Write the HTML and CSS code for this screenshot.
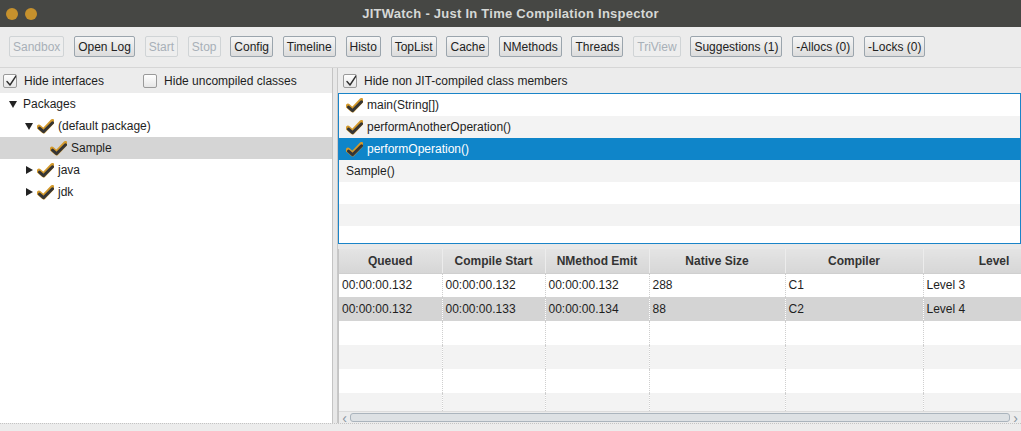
FILE: index.html
```html
<!DOCTYPE html>
<html>
<head>
<meta charset="utf-8">
<title>JITWatch</title>
<link rel="stylesheet" href="styles.css">
</head>
<body>
<svg class="defs" width="0" height="0">
  <defs>
    <g id="chk">
      <path d="M2 8 L6.5 12 L15.5 2.5" fill="none" stroke="#d49a2c" stroke-width="4.8" stroke-linecap="round" stroke-linejoin="round"/>
      <path d="M2.5 9.2 L6.5 12.7 L15.5 3.8" fill="none" stroke="#353535" stroke-width="3" stroke-linecap="round" stroke-linejoin="round"/>
    </g>
    <g id="boxchk">
      <path d="M3 7.5 L6 11 L12 2" fill="none" stroke="#2e2e2e" stroke-width="1.4" stroke-linecap="round" stroke-linejoin="round"/>
    </g>
  </defs>
</svg>
<div class="window">
  <header class="titlebar">
    <div class="lights"><span class="light"></span><span class="light"></span></div>
    <div class="title">JITWatch - Just In Time Compilation Inspector</div>
    <div></div>
  </header>
  <nav class="toolbar">
    <button class="btn" disabled>Sandbox</button>
    <button class="btn">Open Log</button>
    <button class="btn" disabled>Start</button>
    <button class="btn" disabled>Stop</button>
    <button class="btn">Config</button>
    <button class="btn">Timeline</button>
    <button class="btn">Histo</button>
    <button class="btn">TopList</button>
    <button class="btn">Cache</button>
    <button class="btn">NMethods</button>
    <button class="btn">Threads</button>
    <button class="btn" disabled>TriView</button>
    <button class="btn">Suggestions (1)</button>
    <button class="btn">-Allocs (0)</button>
    <button class="btn">-Locks (0)</button>
  </nav>
  <main class="main">
    <section class="left">
      <div class="opts">
        <label class="cb"><span class="box"><svg width="14" height="14"><use href="#boxchk"/></svg></span>Hide interfaces</label>
        <label class="cb cb-second"><span class="box"></span>Hide uncompiled classes</label>
      </div>
      <div class="tree">
        <div class="node lvl0"><span class="tri tri-d"></span><span>Packages</span></div>
        <div class="node lvl1"><span class="tri tri-d"></span><svg class="ck" width="17" height="15"><use href="#chk"/></svg><span>(default package)</span></div>
        <div class="node lvl2 sel"><svg class="ck" width="17" height="15"><use href="#chk"/></svg><span>Sample</span></div>
        <div class="node lvl1"><span class="tri tri-r"></span><svg class="ck" width="17" height="15"><use href="#chk"/></svg><span>java</span></div>
        <div class="node lvl1"><span class="tri tri-r"></span><svg class="ck" width="17" height="15"><use href="#chk"/></svg><span>jdk</span></div>
      </div>
    </section>
    <div class="vdiv"></div>
    <section class="right">
      <div class="opts">
        <label class="cb"><span class="box"><svg width="14" height="14"><use href="#boxchk"/></svg></span>Hide non JIT-compiled class members</label>
      </div>
      <div class="list">
        <div class="item"><svg class="ck" width="17" height="15"><use href="#chk"/></svg><span>main(String[])</span></div>
        <div class="item alt"><svg class="ck" width="17" height="15"><use href="#chk"/></svg><span>performAnotherOperation()</span></div>
        <div class="item selected"><svg class="ck" width="17" height="15"><use href="#chk"/></svg><span>performOperation()</span></div>
        <div class="item alt"><span>Sample()</span></div>
        <div class="item"></div>
        <div class="item alt"></div>
        <div class="item"></div>
      </div>
      <div class="hdiv"></div>
      <div class="tablewrap">
        <div class="tview">
          <table class="grid">
            <colgroup>
              <col class="c1"><col class="c2"><col class="c3"><col class="c4"><col class="c5"><col class="c6">
            </colgroup>
            <thead>
              <tr><th>Queued</th><th>Compile Start</th><th>NMethod Emit</th><th>Native Size</th><th>Compiler</th><th>Level</th></tr>
            </thead>
            <tbody>
              <tr><td>00:00:00.132</td><td>00:00:00.132</td><td>00:00:00.132</td><td>288</td><td>C1</td><td>Level 3</td></tr>
              <tr class="rsel"><td>00:00:00.132</td><td>00:00:00.133</td><td>00:00:00.134</td><td>88</td><td>C2</td><td>Level 4</td></tr>
              <tr><td></td><td></td><td></td><td></td><td></td><td></td></tr>
              <tr class="ralt"><td></td><td></td><td></td><td></td><td></td><td></td></tr>
              <tr><td></td><td></td><td></td><td></td><td></td><td></td></tr>
              <tr class="ralt"><td></td><td></td><td></td><td></td><td></td><td></td></tr>
            </tbody>
          </table>
        </div>
        <div class="hscroll">
          <span class="arr">&#8249;</span>
          <div class="track"></div>
          <span class="arr">&#8250;</span>
        </div>
      </div>
    </section>
  </main>
  <footer class="status"></footer>
</div>
</body>
</html>
```

FILE: styles.css
```css
* { box-sizing: border-box; }
html, body { margin: 0; padding: 0; }
body {
  width: 1021px;
  height: 431px;
  overflow: hidden;
  background: #ececec;
  font-family: "Liberation Sans", Arial, sans-serif;
  font-size: 12px;
  color: #1e1e1e;
}
.defs { position: absolute; width: 0; height: 0; }
.window { display: flex; flex-direction: column; height: 431px; }

.titlebar {
  height: 27px;
  background: #464744;
  display: grid;
  grid-template-columns: 1fr auto 1fr;
  align-items: center;
}
.lights { display: flex; gap: 7px; padding-left: 6px; }
.light { width: 12px; height: 12px; border-radius: 50%; background: #c6912d; }
.title { color: #d6d8d6; font-weight: bold; font-size: 13px; letter-spacing: 0.25px; }

.toolbar {
  height: 41px;
  display: flex;
  gap: 9.8px;
  align-items: flex-start;
  padding: 9px 0 0 9px;
  border-bottom: 1px solid #d6d6d6;
}
.btn {
  height: 21px;
  padding: 0 3px;
  font-family: inherit;
  font-size: 12px;
  color: #222;
  background: linear-gradient(#f6f6f6, #dcdcdc);
  border: 1px solid #9ba5ad;
  border-radius: 2px;
}
.btn:disabled { color: #a8b0b8; border-color: #d0d4d6; background: #eeeeee; }

.main { display: flex; height: 355px; }

.left { width: 333px; display: flex; flex-direction: column; border-right: 1px solid #c4c4c4; }
.opts { height: 25px; display: flex; align-items: center; padding-left: 3px; }
.cb { display: flex; align-items: center; gap: 7px; color: #1e1e1e; }
.cb-second { margin-left: 39px; }
.box {
  width: 14px; height: 14px;
  border: 1px solid #9a9a9a;
  border-radius: 2px;
  background: linear-gradient(#ffffff, #e6e6e6);
  display: flex; align-items: center; justify-content: center;
}
.box svg { display: block; }

.tree { flex: 1; background: #fff; }
.node { height: 22px; display: flex; align-items: center; }
.node.lvl0 { padding-left: 9px; }
.node.lvl1 { padding-left: 25px; }
.node.lvl2 { padding-left: 50px; }
.node.sel { background: #d5d5d5; }
.tri { width: 8px; height: 8px; margin-right: 6px; position: relative; flex: none; }
.tri-d::before {
  content: ""; position: absolute; left: 0; top: 1px;
  border-left: 4px solid transparent; border-right: 4px solid transparent; border-top: 7px solid #222;
}
.tri-r::before {
  content: ""; position: absolute; left: 1px; top: 0;
  border-top: 4px solid transparent; border-bottom: 4px solid transparent; border-left: 7px solid #222;
}
.ck { margin-right: 4px; flex: none; }
.lvl1 .tri { margin-right: 4px; }

.vdiv {
  width: 5px;
  background: #e8e8e8;
  border-right: 1px solid #c8c8c8;
}

.right { flex: 1; display: flex; flex-direction: column; min-width: 0; }
.right .opts { padding-left: 5px; }
.list {
  height: 151px;
  border: 1px solid #1a84c8;
  background: #fff;
}
.item { height: 22px; display: flex; align-items: center; padding-left: 7px; }
.item.alt { background: #f3f3f3; }
.item.selected { background: #0f85c9; color: #fff; }

.hdiv { height: 5px; background: #e8e8e8; }

.tablewrap { flex: 1; display: flex; flex-direction: column; border-left: 1px solid #c4c4c4; min-height: 0; }
.tview { flex: 1; overflow: hidden; background: #fff; }
.grid { border-collapse: collapse; table-layout: fixed; width: 726px; }
.c1 { width: 103px; } .c2 { width: 103px; } .c3 { width: 104px; }
.c4 { width: 136px; } .c5 { width: 138px; } .c6 { width: 142px; }
.grid th {
  height: 24px;
  background: linear-gradient(#e4e4e4, #d6d6d6);
  font-weight: bold;
  color: #333;
  border-right: 1px solid #ececec;
  border-bottom: 1px solid #cfcfcf;
  text-align: center;
  padding: 0;
}
.grid td {
  height: 24px;
  padding: 0 0 0 3px;
  border-right: 1px dotted #cfcfcf;
  white-space: nowrap;
  overflow: hidden;
}
.grid tr.rsel td { background: #d4d4d4; }
.grid tr.ralt td { background: #f3f3f3; }

.hscroll {
  height: 12px;
  display: flex;
  align-items: center;
  background: #ececec;
  border-top: 1px solid #dcdcdc;
  padding: 0 1px;
}
.arr { width: 9px; color: #8a96a2; font-size: 14px; line-height: 10px; text-align: center; }
.track {
  flex: 1;
  height: 9px;
  border: 1px solid #aab4bd;
  border-radius: 3px;
  background: #dde1e4;
  margin: 0 1px;
}

.status { height: 8px; border-top: 1px dotted #c4c4c4; background: #ececec; }
```
